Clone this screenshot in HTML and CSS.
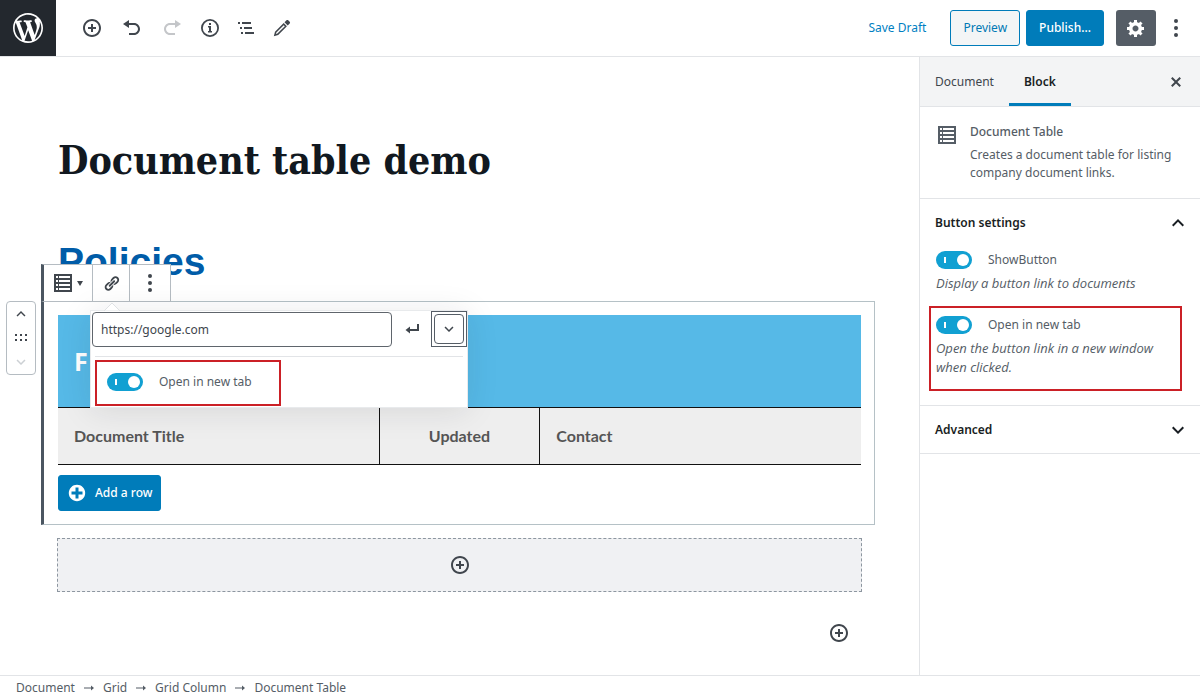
FILE: index.html
```html
<!DOCTYPE html>
<html lang="en">

<head>
    <meta charset="UTF-8">
    <meta name="viewport" content="width=device-width, initial-scale=1.0">
    <title>Edit Page</title>
    <link rel="stylesheet" href="styles.css">
</head>

<body>

    <!-- Top bar -->
    <header class="header">
        <a class="logo" href="#" aria-label="View all pages">
            <svg width="30" height="30" viewBox="0 0 20 20"><path d="M20 10c0-5.51-4.49-10-10-10C4.48 0 0 4.49 0 10c0 5.52 4.48 10 10 10 5.51 0 10-4.48 10-10zM7.78 15.37L4.37 6.22c.55-.02 1.17-.08 1.17-.08.5-.06.44-1.13-.06-1.11 0 0-1.45.11-2.37.11-.18 0-.37 0-.58-.01C4.12 2.69 6.87 1.11 10 1.11c2.33 0 4.45.87 6.05 2.34-.68-.11-1.65.39-1.65 1.58 0 .74.45 1.36.9 2.1.35.61.55 1.36.55 2.46 0 1.49-1.4 5-1.4 5l-3.03-8.37c.54-.02.82-.17.82-.17.5-.05.44-1.25-.06-1.22 0 0-1.44.12-2.38.12-.87 0-2.33-.12-2.33-.12-.5-.03-.56 1.2-.06 1.22l.92.08 1.26 3.41zM17.41 10c.24-.64.74-1.87.43-4.25.7 1.29 1.05 2.71 1.05 4.25 0 3.29-1.73 6.24-4.4 7.78.97-2.59 1.94-5.2 2.92-7.78zM6.1 18.09C3.12 16.65 1.11 13.53 1.11 10c0-1.3.23-2.48.72-3.59C3.25 10.3 4.67 14.2 6.1 18.09zm4.03-6.63l2.58 6.98c-.86.29-1.76.45-2.71.45-.79 0-1.57-.11-2.29-.33.81-2.38 1.62-4.74 2.42-7.1z"/></svg>
        </a>
        <div class="tools">
            <div class="tool-group">
                <button class="icon-button" aria-label="Add block">
                    <svg width="20" height="20" viewBox="0 0 20 20"><path d="M10 1c-5 0-9 4-9 9s4 9 9 9 9-4 9-9-4-9-9-9zm0 16c-3.9 0-7-3.1-7-7s3.1-7 7-7 7 3.1 7 7-3.1 7-7 7zm1-11H9v3H6v2h3v3h2v-3h3V9h-3V6z"/></svg>
                </button>
                <button class="icon-button" aria-label="Undo">
                    <svg width="20" height="20" viewBox="0 0 20 20"><path d="M12 5H7V2L1 6l6 4V7h5c2.2 0 4 1.8 4 4s-1.8 4-4 4H7v2h5c3.3 0 6-2.7 6-6s-2.7-6-6-6z"/></svg>
                </button>
                <button class="icon-button" aria-label="Redo" disabled>
                    <svg width="20" height="20" viewBox="0 0 20 20"><path d="M8 5h5V2l6 4-6 4V7H8c-2.2 0-4 1.8-4 4s1.8 4 4 4h5v2H8c-3.3 0-6-2.7-6-6s2.7-6 6-6z"/></svg>
                </button>
            </div>
            <button class="icon-button" aria-label="Content structure">
                <svg width="20" height="20" viewBox="0 0 20 20"><path d="M10 1a9 9 0 1 0 0 18 9 9 0 0 0 0-18zm0 16.200a7.200 7.200 0 1 1 0-14.400 7.200 7.200 0 0 1 0 14.400zM9 5h2v2H9zM8 8h3v5h1v1.500H8V13h1V9.500H8z"/></svg>
            </button>
            <button class="icon-button" aria-label="Block navigation">
                <svg width="20" height="20" viewBox="0 0 20 20"><path d="M2 4h2v2H2zM6 4h9v2H6zM4 9h2v2H4zM8 9h8v2H8zM5 14h2v2H5zM9 14h9v2H9z"/></svg>
            </button>
            <button class="icon-button" aria-label="Modes">
                <svg width="20" height="20" viewBox="0 0 20 20"><path fill-rule="evenodd" d="M14.500 2.300c.5-.5 1.200-.5 1.700 0l1.500 1.500c.5.500.5 1.200 0 1.700l-2 2-3.200-3.200zM11.700 5.100l3.200 3.200-8.700 8.700-4.400 1.200 1.200-4.400zm0 2.100l-7.300 7.400-.5 1.500 1.500-.5 7.400-7.300z"/></svg>
            </button>
        </div>
        <div class="actions">
            <button class="save">Save Draft</button>
            <button class="button">Preview</button>
            <button class="button primary">Publish...</button>
            <button class="settings" aria-label="Settings">
                <svg width="20" height="20" viewBox="0 0 20 20"><path d="M18 12h-2.180c-.17.7-.44 1.350-.81 1.930l1.540 1.540-2.100 2.100-1.540-1.540c-.58.36-1.230.63-1.910.79V19H8v-2.180c-.68-.16-1.330-.43-1.910-.79l-1.540 1.540-2.120-2.120 1.540-1.540c-.36-.58-.63-1.230-.79-1.910H1V9.030h2.170c.16-.7.44-1.350.8-1.940L2.430 5.550l2.100-2.100 1.540 1.540c.58-.37 1.240-.64 1.930-.81V2h3v2.180c.68.16 1.330.43 1.910.79l1.540-1.540 2.120 2.120-1.540 1.540c.36.59.64 1.240.8 1.940H18V12zm-8.500 1.500c1.660 0 3-1.340 3-3s-1.340-3-3-3-3 1.340-3 3 1.340 3 3 3z"/></svg>
            </button>
            <button class="more" aria-label="More tools">
                <svg width="20" height="20" viewBox="0 0 20 20"><circle cx="10" cy="3" r="2"/><circle cx="10" cy="10" r="2"/><circle cx="10" cy="17" r="2"/></svg>
            </button>
        </div>
    </header>

    <div class="main">

        <!-- Editor canvas -->
        <main class="editor">
            <h1 class="title">Document table demo</h1>
            <h2 class="heading">Policies</h2>

            <section class="block">
                <!-- Mover -->
                <div class="mover">
                    <button aria-label="Move up"><svg width="18" height="18" viewBox="0 0 24 24"><path d="M12 8l-6 6 1.410 1.410L12 10.830l4.590 4.580L18 14z"/></svg></button>
                    <svg width="12" height="8" viewBox="0 0 12 8"><path d="M0 0h2v2H0zM5 0h2v2H5zM10 0h2v2h-2zM0 5h2v2H0zM5 5h2v2H5zM10 5h2v2h-2z"/></svg>
                    <button aria-label="Move down" disabled><svg width="18" height="18" viewBox="0 0 24 24"><path d="M7.410 8.590L12 13.170l4.590-4.580L18 10l-6 6-6-6z"/></svg></button>
                </div>

                <!-- Block toolbar -->
                <div class="toolbar">
                    <button class="type" aria-label="Change block type">
                        <svg width="18" height="18" viewBox="0 0 18 18"><path fill-rule="evenodd" d="M0 0h18v18H0zM2 2v2h2V2zm3 0v2h11V2zM2 6v2h2V6zm3 0v2h11V6zM2 10v2h2v-2zm3 0v2h11v-2zM2 14v2h2v-2zm3 0v2h11v-2z"/></svg>
                        <svg width="6" height="5" viewBox="0 0 6 5"><path d="M0 0h6L3 5z"/></svg>
                    </button>
                    <button aria-label="Edit link">
                        <svg width="17" height="17" viewBox="0 0 20 20"><path d="M17.740 2.760c1.680 1.690 1.680 4.410 0 6.100l-1.530 1.520c-1.120 1.120-2.700 1.470-4.140 1.090l2.620-2.610.76-.77.76-.76c.84-.84.84-2.200 0-3.040-.84-.85-2.200-.85-3.040 0l-.77.76-3.380 3.380c-.37-1.440-.02-3.020 1.100-4.140l1.520-1.530c1.690-1.680 4.420-1.680 6.100 0zM8.590 13.430l5.340-5.340c.42-.42.42-1.100 0-1.520-.44-.43-1.130-.39-1.530 0l-5.330 5.340c-.42.42-.42 1.100 0 1.520.44.43 1.130.39 1.520 0zm-.76 2.290l4.140-4.150c.38 1.440.03 3.020-1.090 4.140l-1.520 1.530c-1.690 1.680-4.410 1.680-6.100 0-1.680-1.680-1.680-4.420 0-6.100l1.530-1.520c1.120-1.120 2.700-1.470 4.140-1.100l-4.140 4.150c-.85.84-.85 2.200 0 3.050.84.84 2.200.84 3.040 0z"/></svg>
                    </button>
                    <button aria-label="More options">
                        <svg width="20" height="20" viewBox="0 0 20 20"><circle cx="10" cy="3" r="2"/><circle cx="10" cy="10" r="2"/><circle cx="10" cy="17" r="2"/></svg>
                    </button>
                </div>

                <table class="documents">
                    <colgroup>
                        <col class="col-wide">
                        <col class="col-narrow">
                        <col class="col-wide">
                    </colgroup>
                    <thead>
                        <tr class="caption">
                            <th colspan="3">F</th>
                        </tr>
                        <tr>
                            <th>Document Title</th>
                            <th class="updated">Updated</th>
                            <th>Contact</th>
                        </tr>
                    </thead>
                </table>

                <button class="button primary add-row">
                    <svg width="20" height="20" viewBox="0 0 20 20"><path d="M15.800 4.200c3.200 3.210 3.200 8.390 0 11.600-3.210 3.200-8.390 3.200-11.600 0C1 12.590 1 7.410 4.200 4.200 7.410 1 12.590 1 15.800 4.200zm-4.300 11.300v-4h4v-3h-4v-4h-3v4h-4v3h4v4h3z"/></svg>
                    Add a row
                </button>

                <!-- Link popover -->
                <div class="popover">
                    <svg class="pointer" width="16" height="8" viewBox="0 0 16 8"><path d="M0 8l8-8 8 8z"/></svg>
                    <form class="link-form">
                        <input class="url" type="text" value="https://google.com" aria-label="URL">
                        <button class="apply" type="button" aria-label="Apply">
                            <svg width="14" height="12" viewBox="0 0 14 12"><path class="line" d="M13 1v6H3"/><path d="M5 3.500v7L.5 7z"/></svg>
                        </button>
                        <button class="expand" type="button" aria-label="Link settings">
                            <span class="expand-inner">
                                <svg width="18" height="18" viewBox="0 0 24 24"><path d="M7.410 8.590L12 13.170l4.590-4.580L18 10l-6 6-6-6z"/></svg>
                            </span>
                        </button>
                    </form>
                    <div class="link-settings">
                        <div class="highlight">
                            <label class="toggle"><input type="checkbox" checked>Open in new tab</label>
                        </div>
                    </div>
                </div>
            </section>

            <button class="placeholder" aria-label="Add block">
                <svg width="20" height="20" viewBox="0 0 20 20"><path d="M10 1c-5 0-9 4-9 9s4 9 9 9 9-4 9-9-4-9-9-9zm0 16c-3.900 0-7-3.100-7-7s3.100-7 7-7 7 3.100 7 7-3.100 7-7 7zm1-11H9v3H6v2h3v3h2v-3h3V9h-3V6z"/></svg>
            </button>
            <button class="appender" aria-label="Add block">
                <svg width="20" height="20" viewBox="0 0 20 20"><path d="M10 1c-5 0-9 4-9 9s4 9 9 9 9-4 9-9-4-9-9-9zm0 16c-3.900 0-7-3.100-7-7s3.100-7 7-7 7 3.100 7 7-3.100 7-7 7zm1-11H9v3H6v2h3v3h2v-3h3V9h-3V6z"/></svg>
            </button>
        </main>

        <!-- Settings sidebar -->
        <aside class="sidebar">
            <div class="tabs">
                <button class="tab">Document</button>
                <button class="tab active">Block</button>
                <button class="close" aria-label="Close settings">
                    <svg width="20" height="20" viewBox="0 0 20 20"><path d="M14.950 6.460L11.410 10l3.540 3.540-1.410 1.410L10 11.420l-3.530 3.530-1.420-1.420L8.580 10 5.050 6.470l1.420-1.420L10 8.580l3.540-3.530z"/></svg>
                </button>
            </div>
            <div class="card">
                <svg width="18" height="18" viewBox="0 0 18 18"><path fill-rule="evenodd" d="M0 0h18v18H0zM2 2v2h2V2zm3 0v2h11V2zM2 6v2h2V6zm3 0v2h11V6zM2 10v2h2v-2zm3 0v2h11v-2zM2 14v2h2v-2zm3 0v2h11v-2z"/></svg>
                <div>
                    <h2>Document Table</h2>
                    <p>Creates a document table for listing company document links.</p>
                </div>
            </div>
            <section class="panel open">
                <button class="panel-title">
                    Button settings
                    <svg width="24" height="24" viewBox="0 0 24 24"><path d="M12 8l-6 6 1.410 1.410L12 10.830l4.590 4.580L18 14z"/></svg>
                </button>
                <div class="control">
                    <label class="toggle"><input type="checkbox" checked>ShowButton</label>
                    <p class="help">Display a button link to documents</p>
                </div>
                <div class="control highlight">
                    <label class="toggle"><input type="checkbox" checked>Open in new tab</label>
                    <p class="help">Open the button link in a new window when clicked.</p>
                </div>
            </section>
            <section class="panel">
                <button class="panel-title">
                    Advanced
                    <svg width="24" height="24" viewBox="0 0 24 24"><path d="M7.410 8.590L12 13.170l4.590-4.580L18 10l-6 6-6-6z"/></svg>
                </button>
            </section>
        </aside>
    </div>

    <!-- Breadcrumb -->
    <footer class="footer">
        <a href="#">Document</a>
        <svg width="10" height="6" viewBox="0 0 10 6"><path d="M0 2.400h7V.5L10 3 7 5.500V3.600H0z"/></svg>
        <a href="#">Grid</a>
        <svg width="10" height="6" viewBox="0 0 10 6"><path d="M0 2.400h7V.5L10 3 7 5.500V3.600H0z"/></svg>
        <a href="#">Grid Column</a>
        <svg width="10" height="6" viewBox="0 0 10 6"><path d="M0 2.400h7V.5L10 3 7 5.500V3.600H0z"/></svg>
        <span>Document Table</span>
    </footer>

</body>

</html>
```
FILE: styles.css
```css
* {
    margin: 0;
    padding: 0;
    box-sizing: border-box;
}

body {
    display: flex;
    flex-direction: column;
    height: 100vh;
    background: #fff;
    color: #555d66;
    font: 12px/18px "Noto Sans", sans-serif;
    overflow: hidden;
}

button,
input {
    font: inherit;
    color: inherit;
}

button {
    display: flex;
    align-items: center;
    justify-content: center;
    background: none;
    border: none;
    cursor: pointer;
}

svg {
    fill: currentColor;
    flex: none;
}

a {
    color: inherit;
    text-decoration: none;
}

/* Top bar */
.header {
    display: flex;
    align-items: center;
    flex: none;
    height: 57px;
    border-bottom: 1px solid #e2e4e7;
}

.logo {
    display: flex;
    align-items: center;
    justify-content: center;
    width: 56px;
    height: 56px;
    background: #23282e;
    color: #fff;
}

.tools {
    display: flex;
    padding-left: 18px;
    color: #40464d;
}

.tool-group {
    display: flex;
    gap: 4px;
    margin-right: 2px;
}

.icon-button {
    width: 36px;
    height: 36px;
}

.icon-button:disabled {
    color: #c4c6c9;
}

.actions {
    display: flex;
    align-items: center;
    margin-left: auto;
    padding-right: 14px;
}

.save {
    margin-right: 24px;
    color: #007fc2;
}

.button {
    height: 36px;
    margin-right: 6px;
    padding: 0 12px;
    background: #f3f5f6;
    border: 1px solid #007cba;
    border-radius: 3px;
    color: #0079b5;
}

.button.primary {
    background: #007cba;
    color: #fff;
    font-weight: 500;
}

.settings {
    width: 40px;
    height: 36px;
    margin-left: 6px;
    background: #555d66;
    border-radius: 3px;
    color: #fff;
}

.more {
    width: 20px;
    height: 36px;
    margin-left: 10px;
    color: #40464d;
}

.main {
    display: flex;
    flex: 1;
    min-height: 0;
}

/* Editor canvas */
.editor {
    flex: 1;
    min-width: 0;
    padding: 78px 57px 0;
}

.title,
.heading {
    padding: 0 1px;
}

.title {
    color: #111820;
    font: bold 39px/50px "DejaVu Serif Condensed", "DejaVu Serif", serif;
}

.heading {
    margin-top: 52px;
    color: #005ca8;
    font: bold 39px/50px "Liberation Sans", Arial, sans-serif;
}

/* Selected block */
.block {
    position: relative;
    margin: 14px -13px 0 -16px;
    padding: 13px 13px 13px 14px;
    border: 1px solid #b5c1c6;
    border-left: 3px solid #4b5661;
}

.mover {
    position: absolute;
    top: -1px;
    left: -38px;
    display: flex;
    flex-direction: column;
    align-items: center;
    justify-content: space-between;
    width: 30px;
    height: 74px;
    padding: 2px 0;
    background: #fff;
    border: 1px solid #b5bcc2;
    border-radius: 4px;
    color: #40464d;
}

.mover button {
    width: 28px;
    height: 20px;
}

.mover button:disabled {
    color: #ccd0d4;
}

.toolbar {
    position: absolute;
    bottom: 100%;
    left: -3px;
    display: flex;
    height: 38px;
    background: #fff;
    border: 1px solid #b5bcc2;
    border-width: 1px 0;
    border-left: 3px solid #4b5661;
    color: #40464d;
}

.toolbar button {
    width: 37px;
    border-right: 1px solid #b5bcc2;
}

.toolbar button:last-child {
    width: 41px;
}

.toolbar .type {
    gap: 5px;
    width: 49px;
}

.documents {
    width: 100%;
    border-collapse: collapse;
    table-layout: fixed;
    background: #eee;
    color: #555;
    font: bold 16px/24px Lato, sans-serif;
    text-align: left;
}

.col-wide {
    width: 40%;
}

.col-narrow {
    width: 20%;
}

.documents th {
    height: 57px;
    padding: 0 16px;
    border-bottom: 1px solid #111;
    border-left: 1px solid #111;
}

.documents th:first-child {
    border-left: none;
}

.documents .updated {
    text-align: center;
}

.documents .caption th {
    height: 92px;
    background: #56b9e7;
    color: #fff;
    font: bold 25px/36px "Open Sans", sans-serif;
}

.add-row {
    gap: 8px;
    margin-top: 10px;
    padding: 0 8px;
}

/* Link popover */
.popover {
    position: absolute;
    top: 8px;
    left: 46px;
    width: 378px;
    background: #fff;
    border: 1px solid #e8eaec;
    box-shadow: 0 3px 30px rgba(25, 30, 35, 0.1);
}

.pointer {
    position: absolute;
    top: -8px;
    left: 13px;
    fill: #fff;
    stroke: #dfe2e5;
}

.link-form {
    display: flex;
    align-items: flex-end;
    justify-content: space-between;
    height: 36px;
    padding-left: 1px;
}

.url {
    width: 300px;
    height: 35px;
    padding: 0 8px;
    background: #fff;
    border: 1px solid #5f656c;
    border-radius: 4px;
    color: #40464d;
}

.link-form button {
    width: 36px;
    height: 36px;
    color: #40464d;
}

.line {
    fill: none;
    stroke: currentColor;
    stroke-width: 2;
}

.link-form .expand {
    padding: 2px;
    border: 1px solid #555d66;
}

.expand-inner {
    display: flex;
    align-items: center;
    justify-content: center;
    width: 30px;
    height: 30px;
    border: 1px solid #555d66;
    border-radius: 4px;
}

.link-settings {
    display: flex;
    margin: 9px 4px 0;
    padding: 3px 0 1px;
    border-top: 1px solid #e2e4e7;
}

.highlight {
    border: 2px solid #cb2026;
}

.link-settings .highlight {
    padding: 11px 27px 13px 10px;
}

/* Toggle */
.toggle {
    display: flex;
    align-items: center;
    gap: 16px;
}

.toggle input {
    display: flex;
    align-items: center;
    justify-content: space-between;
    flex: none;
    width: 36px;
    height: 18px;
    padding: 0 3px 0 8px;
    appearance: none;
    background: #11a0d2;
    border-radius: 9px;
}

.toggle input::before {
    content: "";
    width: 2px;
    height: 6px;
    background: #fff;
}

.toggle input::after {
    content: "";
    width: 12px;
    height: 12px;
    background: #fff;
    border-radius: 50%;
}

.placeholder {
    width: 100%;
    height: 54px;
    margin-top: 13px;
    background: #f0f1f3;
    border: 1px dashed #8d96a0;
    color: #40464d;
}

.appender {
    width: 36px;
    height: 36px;
    margin: 23px 5px 0 auto;
    color: #40464d;
}

/* Settings sidebar */
.sidebar {
    flex: none;
    width: 281px;
    border-left: 1px solid #e2e4e7;
}

.tabs {
    display: flex;
    height: 50px;
    background: #f3f4f5;
    border-bottom: 1px solid #e2e4e7;
    color: #40464d;
}

.tab {
    height: 49px;
    padding: 3px 15px 0;
    border-bottom: 3px solid transparent;
}

.tab.active {
    border-color: #007cba;
    color: #191e23;
    font-weight: 600;
}

.close {
    width: 36px;
    margin-left: auto;
    margin-right: 6px;
}

.card {
    display: flex;
    gap: 14px;
    padding: 16px 18px;
    border-bottom: 1px solid #e2e4e7;
}

.card svg {
    margin-top: 3px;
}

.card h2 {
    margin-bottom: 5px;
    font-size: 12px;
    font-weight: 500;
}

.panel {
    border-bottom: 1px solid #e2e4e7;
}

.panel.open {
    padding-bottom: 14px;
}

.panel-title {
    justify-content: space-between;
    width: 100%;
    height: 47px;
    padding: 0 10px 0 15px;
    color: #191e23;
    font-weight: 600;
}

.control {
    margin: 0 18px 9px 9px;
    padding: 3px 5px 2px;
    border: 2px solid transparent;
}

.control.highlight {
    margin-bottom: 0;
    padding: 8px 5px 12px;
    border-color: #cb2026;
}

.help {
    margin-top: 5px;
    font: italic 13px/19px "Open Sans", sans-serif;
}

/* Breadcrumb */
.footer {
    display: flex;
    align-items: center;
    flex: none;
    gap: 9px;
    height: 25px;
    padding: 0 16px;
    border-top: 1px solid #e2e4e7;
}
```
